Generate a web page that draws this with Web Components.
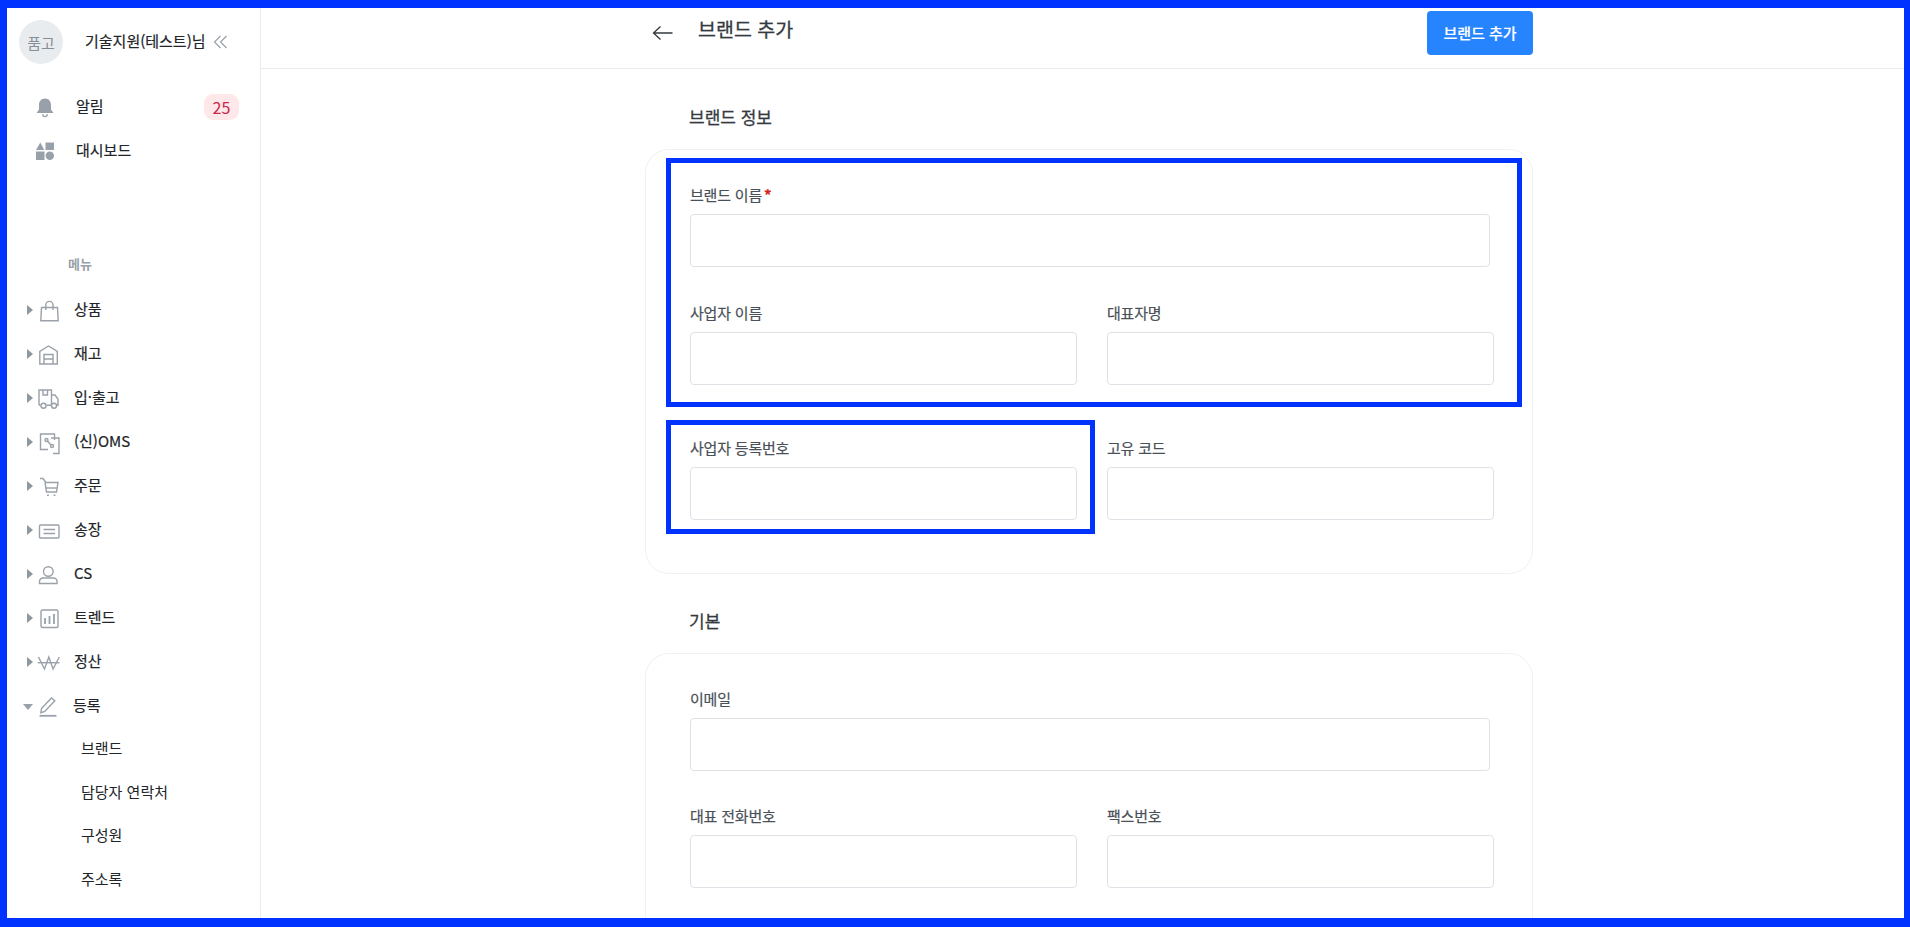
<!DOCTYPE html>
<html lang="ko"><head><meta charset="utf-8"><title>브랜드 추가</title>
<style>
html,body{margin:0;padding:0;height:100%;overflow:hidden;background:#fff}
body{font-family:"Noto Sans CJK KR","Noto Sans",sans-serif;font-size:15px;color:#212529}
</style></head><body>
<app-frame>
  <side-bar slot="side">
    <nav-item icon="bag" label="상품"></nav-item>
    <nav-item icon="store" label="재고"></nav-item>
    <nav-item icon="truck" label="입·출고"></nav-item>
    <nav-item icon="oms" label="(신)OMS"></nav-item>
    <nav-item icon="cart" label="주문"></nav-item>
    <nav-item icon="invoice" label="송장"></nav-item>
    <nav-item icon="user" label="CS"></nav-item>
    <nav-item icon="chart" label="트렌드"></nav-item>
    <nav-item icon="won" label="정산"></nav-item>
    <nav-item icon="pen" label="등록" open></nav-item>
    <sub-item>브랜드</sub-item>
    <sub-item>담당자 연락처</sub-item>
    <sub-item>구성원</sub-item>
    <sub-item>주소록</sub-item>
  </side-bar>
  <top-bar slot="top" heading="브랜드 추가" action="브랜드 추가"></top-bar>
  <form-section heading="브랜드 정보" style="--card-pad-bottom:18px;--title-top:36px">
    <form-field label="브랜드 이름" required wide gap="36"></form-field>
    <form-field label="사업자 이름" gap="53"></form-field>
    <form-field label="대표자명" gap="53"></form-field>
    <form-field label="사업자 등록번호" gap="35"></form-field>
    <form-field label="고유 코드" gap="35"></form-field>
    <hl-box style="left:20px;top:8px;width:856px;height:249px"></hl-box>
    <hl-box style="left:20px;top:270px;width:429px;height:114px"></hl-box>
  </form-section>
  <form-section heading="기본" style="--title-top:35px">
    <form-field label="이메일" wide gap="35"></form-field>
    <form-field label="대표 전화번호" gap="36"></form-field>
    <form-field label="팩스번호" gap="36"></form-field>
  </form-section>
</app-frame>
<script>
const def=(n,html)=>{customElements.define(n,class extends HTMLElement{
  constructor(){super();this.attachShadow({mode:'open'}).innerHTML=typeof html==='function'?html(this):html;}
});};
const ICONS={
 bag:'<path d="M5.500 10.500h16l.7 13.200H4.800z"/><path d="M9.800 13V8a3.600 3.600 0 0 1 7.200 0v5"/>',
 store:'<path d="M3.800 23V10.500L12.500 5l8.800 5.500V23z"/><path d="M8 23V13.500h9V23M8 18h9"/>',
 truck:'<path d="M3 20V5h12.500v15"/><path d="M7 5v5h4.500V5"/><path d="M15.500 10h3.500l3 4v6.300h-1.500"/><path d="M3 20.300h1.500M10.500 20.300h5"/><circle cx="7.500" cy="20.800" r="2.500"/><circle cx="18" cy="20.800" r="2.500"/>',
 oms:'<path d="M12 20.500H4.500V5H18.500v6"/><path d="M15 9h8v15.500h-6"/><circle cx="10.500" cy="11" r="1.500"/><circle cx="16" cy="17" r="1.500"/><path d="M11.500 12l3.500 4"/>',
 cart:'<path d="M4 5.500h3l3 4h12l-1.500 9.500H10.500L9 9.500"/><path d="M9.800 15h11.200"/><path d="M12 21.500v1.500M18.500 21.500v1.500" stroke-width="1.800"/>',
 invoice:'<rect x="3.500" y="8" width="19.500" height="13" rx="1"/><path d="M7.500 12.500h11.500M7.500 16.500h11.500"/>',
 user:'<circle cx="12.300" cy="10.500" r="4.800"/><path d="M3.500 22.500v-2a3.500 3.500 0 0 1 3.500-3.500h10.500a3.500 3.500 0 0 1 3.500 3.500v2z"/>',
 chart:'<rect x="5" y="5" width="17" height="17.500" rx="1.500"/><path d="M9 19v-6M13.500 19v-8M18 19V9" stroke-width="1.800"/>',
 won:'<path d="M2.500 8L8.500 20l4.300-12 4.300 12 6.200-12"/><path d="M1.700 13.700h21.800" />',
 pen:'<path d="M6.500 15.500L16.500 5l3.300 2.800L9.800 18.500l-4 1.200z"/><path d="M4.500 22.800h17" stroke-width="1.800"/>'
};
def('app-frame',`<style>
:host{display:block;box-sizing:border-box;height:927px;border:solid #0033ff;border-width:8px 6px 9px 7px;overflow:hidden;background:#fff}
.shell{display:flex;height:100%}
.side{flex:none;width:254px;box-sizing:border-box;border-right:1px solid #e9ecef;overflow:hidden}
.main{flex:1;min-width:0;overflow:hidden}
.body{padding-left:384px}
.col{width:888px;display:flex;flex-direction:column}
</style><div class="shell"><div class="side"><slot name="side"></slot></div>
<div class="main"><slot name="top"></slot><div class="body"><div class="col"><slot></slot></div></div></div></div>`);
def('side-bar',`<style>
:host{display:block}
.head{display:flex;align-items:center;height:44px;padding:12px 0 0 12px}
.av{flex:none;width:44px;height:44px;border-radius:50%;background:#e9ecef;color:#868e96;font-size:15px;display:flex;align-items:center;justify-content:center}
.name{margin-left:22px;font-size:15px;-webkit-text-stroke:.2px;color:#212529;white-space:nowrap;line-height:20px;margin-top:-2px}
.cv{margin-left:7px;width:16px;height:16px;margin-top:-1px;flex:none}
.top{margin-top:21px;display:flex;flex-direction:column}
.row{display:flex;align-items:center;height:44px;padding-left:26px;position:relative}
.row svg{flex:none;width:24px;height:24px}
.row span.t{margin-left:19px;line-height:20px;margin-top:-2px;-webkit-text-stroke:.2px}
.badge{position:absolute;left:197px;top:9px;width:35px;height:26px;border-radius:9px;background:#ffe8ea;color:#c9274a;font-size:16px;display:flex;align-items:center;justify-content:center}
.menu{margin:82px 0 0 61px;font-size:13px;font-weight:700;color:#98a1a9;line-height:18px}
.list{margin-top:15px;display:flex;flex-direction:column}
</style>
<div class="head"><div class="av">품고</div><div class="name">기술지원(테스트)님</div>
<svg class="cv" viewBox="0 0 16 16" fill="none" stroke="#98a1a9" stroke-width="1.200"><path d="M7.500 2L1.500 8l6 6M13.500 2l-6 6 6 6"/></svg></div>
<div class="top">
<div class="row"><svg viewBox="0 0 24 24" fill="#98a1a9"><path d="M12 3.500c-3.800 0-6 2.900-6 6.500v4.500L3.500 18h17L18 14.500V10c0-3.600-2.200-6.500-6-6.500z"/><path d="M9 19.300a3 3 0 0 0 6 0h-1.400a1.600 1.600 0 0 1-3.200 0z"/></svg><span class="t">알림</span><span class="badge">25</span></div>
<div class="row"><svg viewBox="0 0 24 24" fill="#98a1a9"><path d="M7.300 3.500L11.300 11H3z"/><rect x="12.500" y="3.500" width="8.500" height="7.500"/><rect x="3" y="12.500" width="8.500" height="8.500"/><circle cx="16.800" cy="16.800" r="4.200"/></svg><span class="t">대시보드</span></div>
</div>
<div class="menu">메뉴</div>
<div class="list"><slot></slot></div>`);
def('nav-item',el=>{const o=el.hasAttribute('open');return `<style>
:host{display:block;height:44px}
.r{display:flex;align-items:center;height:44px;padding-left:${o?16:20}px}
.c{flex:none;${o?'width:0;height:0;border:5.500px solid transparent;border-top:6px solid #98a1a9;border-bottom:0;margin-right:2px;margin-top:1px':'width:0;height:0;border:5px solid transparent;border-left:6px solid #8f979f;border-right:0;margin-right:3px'}}
svg{flex:none;width:26px;height:26px;fill:none;stroke:#9aa1a9;stroke-width:1.400}
.t{margin-left:12px;line-height:20px;margin-top:-3px;color:#212529;-webkit-text-stroke:.2px;white-space:nowrap}
</style><div class="r"><i class="c"></i><svg viewBox="0 0 26 26">${ICONS[el.getAttribute('icon')]||''}</svg><span class="t">${el.getAttribute('label')}</span></div>`;});
def('sub-item',`<style>:host{display:block;height:43.500px;line-height:39px;padding-left:74px;color:#212529;white-space:nowrap}</style><slot></slot>`);
def('top-bar',el=>`<style>
:host{display:block;height:61px;box-sizing:border-box;border-bottom:1px solid #e9ecef;padding-left:384px}
.w{width:888px;display:flex;align-items:flex-start}
svg{flex:none;width:22px;height:22px;margin:14px 0 0 7px}
h1{margin:9px 0 0 24px;font-size:19.500px;font-weight:400;-webkit-text-stroke:.3px;line-height:24px;color:#343a40;flex:1}
button{flex:none;width:106px;height:44px;margin-top:3px;border:0;border-radius:4px;background:#2684ff;color:#fff;font:500 15px "Noto Sans CJK KR",sans-serif;-webkit-text-stroke:.2px;padding:0 0 2px}
</style><div class="w"><svg viewBox="0 0 22 22" fill="none" stroke="#343a40" stroke-width="1.300"><path d="M20.500 11H1.500M8.500 4.500L1.500 11l7 6.500"/></svg><h1>${el.getAttribute('heading')}</h1><button>${el.getAttribute('action')}</button></div>`);
def('form-section',el=>`<style>
:host{display:block}
h2{margin:var(--title-top,36px) 0 0 44px;font-size:17px;font-weight:400;-webkit-text-stroke:.3px;line-height:24px;color:#343a40}
.card{position:relative;margin-top:20px;border:1px solid #eff1f3;border-radius:24px;padding:35px 35px var(--card-pad-bottom,18px) 44px;display:grid;grid-template-columns:387px 387px;column-gap:30px;background:#fff}
</style><h2>${el.getAttribute('heading')}</h2><div class="card"><slot></slot></div>`);
def('form-field',el=>`<style>
:host{display:block;${el.hasAttribute('wide')?'grid-column:1 / -1;margin-right:4px;':''}}
label{display:block;line-height:20px;margin-bottom:9px;color:#495057;font-size:15px;-webkit-text-stroke:.2px;letter-spacing:-.2px;white-space:nowrap}
em{color:#d81e1e;font-style:normal;font-weight:700;margin-left:-2px}
.i{height:51px;border:1px solid #dee2e6;border-radius:4px;background:#fff;margin-bottom:${el.getAttribute('gap')}px}
</style><label>${el.getAttribute('label')}${el.hasAttribute('required')?' <em>*</em>':''}</label><div class="i"></div>`);
def('hl-box',`<style>:host{position:absolute;box-sizing:border-box;border:5px solid #0033ff;pointer-events:none;display:block}</style>`);
</script>
</body></html>
